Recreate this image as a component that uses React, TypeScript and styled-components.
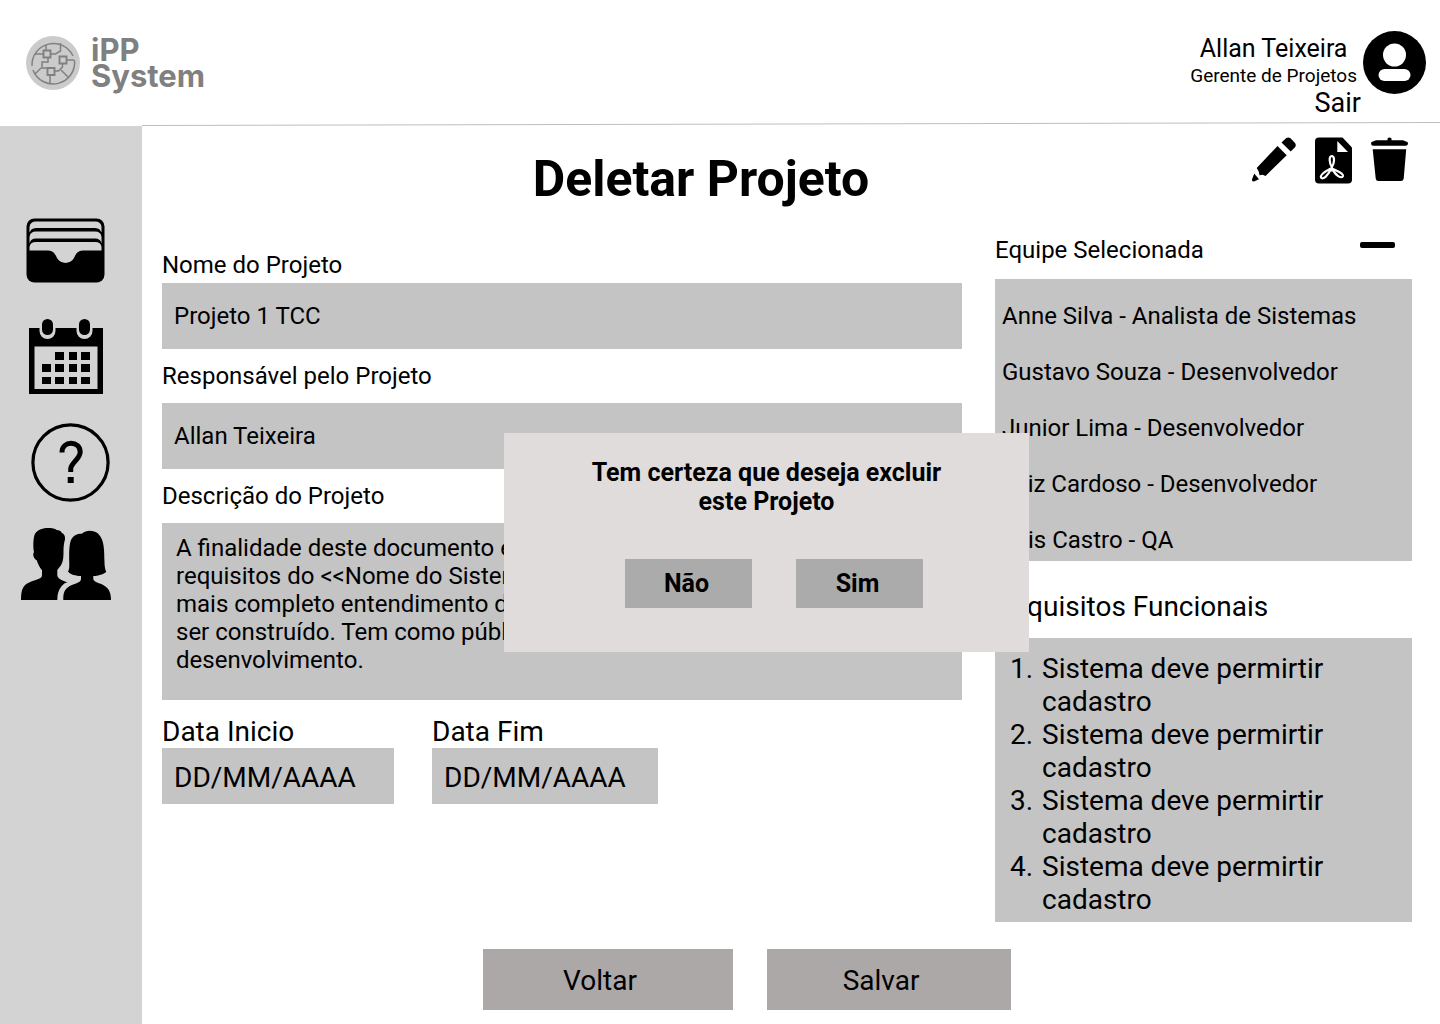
import React from 'react';
import styled, { createGlobalStyle } from 'styled-components';

const GlobalStyle = createGlobalStyle`
  *, *::before, *::after { box-sizing: border-box; }
  body { margin: 0; background: #fff; color: #000; font-family: Roboto, "Liberation Sans", sans-serif; }
  h1, h2, p, ul, ol { margin: 0; padding: 0; }
  button, input, textarea { font: inherit; color: inherit; border: 0; border-radius: 0; }
  button { cursor: pointer; }
  a { color: inherit; text-decoration: none; }
  svg { display: block; }
`;

const Page = styled.div`
  position: relative;
  display: flex;
  flex-direction: column;
  min-height: 100vh;
`;

const Header = styled.header`
  display: flex;
  justify-content: space-between;
  align-items: flex-start;
  height: 122px;
  padding: 31px 14px 0 26px;
`;

const Brand = styled.a`
  display: flex;
  align-items: center;
  gap: 11px;
  padding-top: 5px;
`;

const BrandName = styled.span`
  display: flex;
  flex-direction: column;
  color: #808080;
  font: 700 31px/26px Inter, sans-serif;
`;

const Account = styled.div`
  display: flex;
  gap: 2px;
`;

const AccountText = styled.div`
  display: flex;
  flex-direction: column;
  padding-top: 4px;
  line-height: 27px;
`;

const Person = styled.div`
  padding-right: 4px;
  text-align: center;
`;

const PersonName = styled.p`
  font-size: 25px;
`;

const PersonRole = styled.p`
  font-size: 19px;
`;

const SignOut = styled.a`
  align-self: flex-end;
  font-size: 27px;
  line-height: 28px;
`;

const Divider = styled.svg`
  width: calc(100% - 142px);
  height: 4px;
  margin-left: 142px;
`;

const Body = styled.div`
  display: flex;
  flex: 1;
`;

const Sidebar = styled.nav`
  display: flex;
  flex-direction: column;
  gap: 26px;
  flex: 0 0 142px;
  padding: 92px 0 0 21px;
  background: #d3d3d3;
`;

const Main = styled.main`
  flex: 1;
  min-width: 0;
  padding: 0 28px 14px 20px;
`;

const TitleRow = styled.div`
  display: flex;
  align-items: flex-start;
  height: 110px;
`;

const Title = styled.h1`
  flex: 1;
  padding-top: 24px;
  font-size: 50px;
  line-height: 58px;
  text-align: center;
`;

const Tools = styled.div`
  display: flex;
  align-items: flex-start;
  gap: 19px;
  width: 172px;
  padding: 11px 0 0 12px;
`;

const IconButton = styled.button`
  display: block;
  padding: 0;
  background: none;
`;

const Columns = styled.div`
  display: grid;
  grid-template-columns: minmax(0, 1fr) 417px;
  gap: 33px;
`;

const Form = styled.form`
  padding-top: 15px;
`;

const Field = styled.div<{ $gap: number }>`
  display: flex;
  flex-direction: column;
  gap: ${(p) => p.$gap}px;
  margin-bottom: 13px;
  font-size: 24px;
  line-height: 28px;
`;

const TextBox = styled.input`
  width: 100%;
  height: 66px;
  padding: 0 12px;
  background: #c4c4c4;
`;

const Description = styled.textarea`
  width: 100%;
  height: 177px;
  padding: 11px 14px;
  background: #c4c4c4;
  resize: none;
`;

const Dates = styled.div`
  display: grid;
  grid-template-columns: 232px 226px;
  gap: 38px;
  margin-top: 15px;
`;

const DateField = styled.div`
  display: flex;
  flex-direction: column;
  font-size: 28px;
  line-height: 33px;
`;

const DateBox = styled(TextBox)`
  height: 56px;
  padding-top: 2px;
  &::placeholder { color: #000; opacity: 1; }
`;

const PanelHeader = styled.div`
  display: flex;
  align-items: flex-start;
  justify-content: space-between;
  padding-right: 17px;
  margin-bottom: 15px;
`;

const TeamHeading = styled.h2`
  font-size: 24px;
  font-weight: 400;
  line-height: 28px;
`;

const Team = styled.ul`
  display: flex;
  flex-direction: column;
  gap: 28px;
  padding: 23px 7px 7px;
  margin-bottom: 29px;
  background: #c4c4c4;
  list-style: none;
  font-size: 24px;
  line-height: 28px;
`;

const RequirementsHeading = styled.h2`
  margin-bottom: 15px;
  font-size: 28px;
  font-weight: 400;
  line-height: 33px;
`;

const Requirements = styled.ol`
  padding: 14px 0 6px 45px;
  background: #c4c4c4;
  font-size: 28px;
  line-height: 33px;

  li { padding-left: 2px; }
`;

const Actions = styled.div`
  display: flex;
  justify-content: center;
  gap: 34px;
  padding-right: 80px;
  margin-top: 27px;
`;

const Action = styled.button<{ $width: number }>`
  width: ${(p) => p.$width}px;
  height: 61px;
  padding: 2px 16px 0 0;
  background: #aca8a7;
  font-size: 28px;
  line-height: 33px;
`;

const Dialog = styled.div`
  position: absolute;
  top: 433px;
  left: 35%;
  width: 525px;
  padding: 25px 0 44px;
  background: #e0dcdb;
  font-size: 25px;
  font-weight: 700;
  line-height: 29px;
`;

const DialogText = styled.p`
  width: 360px;
  margin: 0 auto 43px;
  text-align: center;
`;

const DialogActions = styled.div`
  display: flex;
  gap: 44px;
  padding-left: 121px;
`;

const DialogButton = styled.button`
  width: 127px;
  height: 49px;
  padding: 0 4px 0 0;
  background: #ababab;
`;

const LogoMark = () => (
  <svg width="54" height="54" viewBox="0 0 54 54" fill="none" stroke="#808080" strokeWidth="1.5" aria-hidden="true">
    <circle cx="27" cy="27" r="27" fill="#cbcbcb" stroke="none" />
    <path d="M6 30A21.500 21.500 0 0 1 47 20M48.500 24A21.500 21.500 0 0 1 7 34" />
    <path d="M17.500 14.500h7v7h-7zM33.500 20.500h7v7h-7zM21.500 32h7v7h-7z" strokeWidth="1.900" />
    <path d="M20 14V9M24.500 18h5l5-3V7M17.500 18H9M40.500 24H48M22 22v4h-6v6h5M28.500 35h4l4-4v-3M15 32l-6 6M24 39v9M35 34l7 7" />
  </svg>
);

const Avatar = () => (
  <svg width="63" height="63" viewBox="0 0 63 63" aria-hidden="true">
    <circle cx="31.500" cy="31.500" r="31.500" />
    <circle cx="31.500" cy="24" r="11.500" fill="#fff" />
    <rect x="15.500" y="38" width="32" height="12" rx="6" fill="#fff" />
  </svg>
);

const WalletIcon = () => (
  <svg width="90" height="75" viewBox="0 0 90 75" aria-hidden="true">
    <rect x="5.500" y="0.500" width="78" height="64" rx="8" />
    <path d="M8.500 14V9Q9 3.500 15 3.500H74Q80 3.500 80.500 9V14Z" fill="#d3d3d3" />
    <path d="M8.500 26V16Q9 10 15 10H74Q80 10 80.500 16V26Z" />
    <path d="M8.500 25V19Q9 13.500 15 13.500H74Q80 13.500 80.500 19V25Z" fill="#d3d3d3" />
    <path d="M8.500 32V26Q9 20.500 15 20.500H74Q80 20.500 80.500 26V32Z" />
    <path d="M8.500 32.500V29Q9 24 15 24H74Q80 24 80.500 29V32.500H62C56 33 55 36 53 40C49 46.500 40 46.500 36 40C34 36 33 33 27 32.500Z" fill="#d3d3d3" />
  </svg>
);

const CalendarIcon = () => (
  <svg width="90" height="78" viewBox="0 0 90 78" aria-hidden="true">
    <path d="M8 9H18.500V12a8 8 0 0 0 16 0V9H55.500V12a8 8 0 0 0 16 0V9H82V75H8Z" />
    <rect x="13.500" y="27.500" width="63" height="42.500" fill="#d3d3d3" />
    <rect x="21" y="0" width="11" height="16" rx="5.500" />
    <rect x="58" y="0" width="11" height="16" rx="5.500" />
    <path d="M34 33h9v8h-9zM48 33h8v8h-8zM60 33h9v8h-9zM21 45h9v8h-9zM34 45h9v8h-9zM48 45h8v8h-8zM60 45h9v8h-9zM21 58h9v7h-9zM34 58h9v7h-9zM48 58h8v7h-8zM60 58h9v7h-9z" />
  </svg>
);

const HelpIcon = () => (
  <svg width="90" height="79" viewBox="0 0 90 79" fill="none" stroke="#000" aria-hidden="true">
    <circle cx="49.500" cy="39.500" r="37.600" strokeWidth="3.200" />
    <path d="M41 29.500C41 17 59.200 17.500 59.200 29C59.200 36 49.700 40 49.700 46V49" strokeWidth="5" />
    <path d="M46.700 54h6v6h-6z" fill="#000" stroke="none" />
  </svg>
);

const PeopleIcon = () => (
  <svg width="90" height="72" viewBox="0 0 90 72" aria-hidden="true">
    <path d="M0 72C0 66 .5 62 2.500 59C5 55.500 10 53.500 14 52.300C18 51 21 50 21 47V42.300C18.500 39 17 36.500 15.700 32.300C13.500 31.500 11 27 13 24C12 20 12 10 14 5.700C17 1.500 22 0 27.300 0C31 0 34 .5 35.700 2C38 2.200 40 3 40.700 4.700C43 6 44.500 8 44 11.500C43 15 42.500 18 42.500 23C42.500 28 42.500 33 40 37.300L36.300 42V47.500C37 51 41 52.500 46.700 54.300C44 55 42.500 56 40.700 58C37.500 62 36.300 66 36.300 72Z" />
    <path d="M42.300 72C42 62 45.500 58.500 55.700 55.300C58.500 54 60 53 60 51V48C55 48 49 46.500 47 43.500C48.300 42 48.300 39 48.300 36C48.300 30 47.500 18 50 12C52 7.500 56 5.700 60.700 5.700C65 2 72 1.500 77 5.500C84 12 83 24 83.500 34C83.500 38 84 41 85.200 43.800C83 46.500 77 48 72.300 48V51C72.500 53 76 54.500 79 55.600C87 59 90 63 90 72Z" />
  </svg>
);

const PencilIcon = () => (
  <svg width="44" height="46" viewBox="0 0 44 46" aria-hidden="true">
    <path d="M29.500 5.500L34 1.300Q36.300-.5 38.500 1.300L43 6Q44.500 8.200 43 10.200L38.700 14.500ZM25.500 9L34.700 18.200L13.500 39L10.700 37.700L7.500 38.300L6.700 34.500L4.700 31ZM2.200 36.500L7 42.300L2 44.500Q-.5 44.500 0 42.500Z" />
  </svg>
);

const PdfIcon = () => (
  <svg width="37" height="47" viewBox="0 0 37 47" aria-hidden="true">
    <path d="M4 0.500H27.500L37 10.500V42.500Q37 46.500 33 46.500H4Q0 46.500 0 42.500V4.500Q0 0.500 4 0.500Z" />
    <path d="M22.300 4V15H33Z" fill="#fff" />
    <path
      d="M16.800 19C13.500 19 14.500 26.500 16.800 30C19.500 26.500 20 19 16.800 19ZM15.800 31.500C11 34 4.500 37.500 6 40.500C7.500 43.500 14 38 15.800 31.500ZM18 32C20.500 33.500 28.500 36 28 39C27 42.500 19.500 38 18 32ZM16.800 29L17 33"
      fill="none"
      stroke="#fff"
      strokeWidth="2.200"
      strokeLinejoin="round"
    />
    <path d="M14.500 34.500L16.800 29L20 34.500Z" fill="#fff" />
  </svg>
);

const TrashIcon = () => (
  <svg width="37" height="45" viewBox="0 0 37 45" aria-hidden="true">
    <path d="M2 4.500L5 3.300H16.500V1.500Q18.500-.7 20.500 1.500V3.300H32L35 4.500Q37 4.700 37 6.500T35 8.700H2Q0 8.500 0 6.500T2 4.500ZM1.700 12.300H35.200L32.700 41.500Q32.300 44 30 44H7.500Q5 44 4.700 41.500Z" />
  </svg>
);

const MinusIcon = () => (
  <svg width="35" height="18" viewBox="0 0 35 18" aria-hidden="true">
    <rect y="6" width="35" height="6" rx="2" />
  </svg>
);

const description = [
  'A finalidade deste documento é especificar os',
  'requisitos do <<Nome do Sistema>>, visando o',
  'mais completo entendimento do sistema a',
  'ser construído. Tem como público a equipe de',
  'desenvolvimento.',
].join('\n');

const team = [
  'Anne Silva - Analista de Sistemas',
  'Gustavo Souza - Desenvolvedor',
  'Junior Lima - Desenvolvedor',
  'Luiz Cardoso - Desenvolvedor',
  'Lais Castro - QA',
];

const requirements = Array(4).fill('Sistema deve permirtir cadastro');

export default function App() {
  return (
    <Page>
      <GlobalStyle />
      <Header>
        <Brand href="#">
          <LogoMark />
          <BrandName>
            <span>iPP</span>
            <span>System</span>
          </BrandName>
        </Brand>
        <Account>
          <AccountText>
            <Person>
              <PersonName>Allan Teixeira</PersonName>
              <PersonRole>Gerente de Projetos</PersonRole>
            </Person>
            <SignOut href="#">Sair</SignOut>
          </AccountText>
          <Avatar />
        </Account>
      </Header>
      <Divider viewBox="0 0 1298 4" preserveAspectRatio="none" aria-hidden="true">
        <path d="M0 3.500L1298 0.500" stroke="#bdbdbd" />
      </Divider>
      <Body>
        <Sidebar aria-label="Menu principal">
          <a href="#" aria-label="Projetos"><WalletIcon /></a>
          <a href="#" aria-label="Calendário"><CalendarIcon /></a>
          <a href="#" aria-label="Ajuda"><HelpIcon /></a>
          <a href="#" aria-label="Equipe"><PeopleIcon /></a>
        </Sidebar>
        <Main>
          <TitleRow>
            <Title>Deletar Projeto</Title>
            <Tools>
              <IconButton type="button" aria-label="Editar"><PencilIcon /></IconButton>
              <IconButton type="button" aria-label="Gerar PDF"><PdfIcon /></IconButton>
              <IconButton type="button" aria-label="Excluir"><TrashIcon /></IconButton>
            </Tools>
          </TitleRow>
          <Columns>
            <Form>
              <Field $gap={4}>
                <label htmlFor="nome">Nome do Projeto</label>
                <TextBox id="nome" defaultValue="Projeto 1 TCC" />
              </Field>
              <Field $gap={13}>
                <label htmlFor="responsavel">Responsável pelo Projeto</label>
                <TextBox id="responsavel" defaultValue="Allan Teixeira" />
              </Field>
              <Field $gap={13}>
                <label htmlFor="descricao">Descrição do Projeto</label>
                <Description id="descricao" defaultValue={description} />
              </Field>
              <Dates>
                <DateField>
                  <label htmlFor="inicio">Data Inicio</label>
                  <DateBox id="inicio" placeholder="DD/MM/AAAA" />
                </DateField>
                <DateField>
                  <label htmlFor="fim">Data Fim</label>
                  <DateBox id="fim" placeholder="DD/MM/AAAA" />
                </DateField>
              </Dates>
            </Form>
            <section>
              <PanelHeader>
                <TeamHeading>Equipe Selecionada</TeamHeading>
                <IconButton type="button" aria-label="Remover da equipe"><MinusIcon /></IconButton>
              </PanelHeader>
              <Team>
                {team.map((member) => <li key={member}>{member}</li>)}
              </Team>
              <RequirementsHeading>Requisitos Funcionais</RequirementsHeading>
              <Requirements>
                {requirements.map((text, i) => <li key={i}>{text}</li>)}
              </Requirements>
            </section>
          </Columns>
          <Actions>
            <Action type="button" $width={250}>Voltar</Action>
            <Action type="button" $width={244}>Salvar</Action>
          </Actions>
        </Main>
      </Body>
      <Dialog role="dialog" aria-labelledby="confirmacao">
        <DialogText id="confirmacao">Tem certeza que deseja excluir este Projeto</DialogText>
        <DialogActions>
          <DialogButton type="button">Não</DialogButton>
          <DialogButton type="button">Sim</DialogButton>
        </DialogActions>
      </Dialog>
    </Page>
  );
}
